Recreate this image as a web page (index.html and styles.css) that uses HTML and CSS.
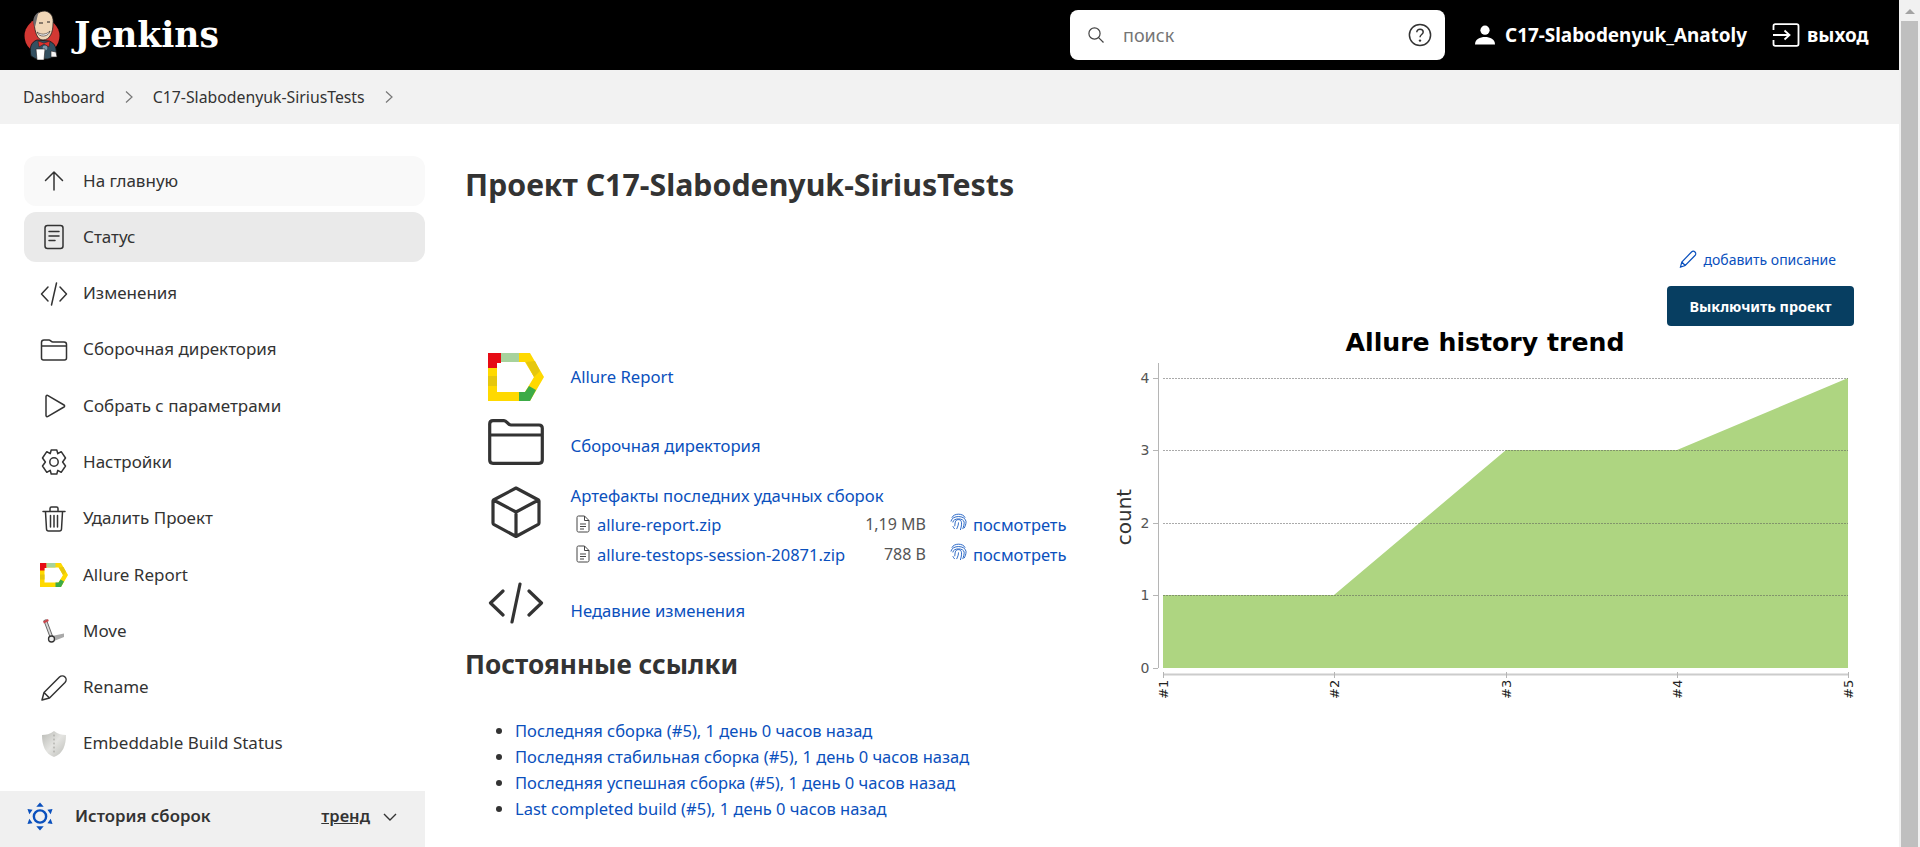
FILE: index.html
```html
<!DOCTYPE html>
<html lang="ru">
<head>
<meta charset="utf-8">
<title>C17-Slabodenyuk-SiriusTests</title>
<link rel="stylesheet" href="styles.css">
</head>
<body>
<div class="window">
  <div class="page">
    <header class="topbar">
      <a class="brand">
        <svg class="brand-mark" viewBox="0 0 36 50" aria-hidden="true">
          <circle cx="18" cy="26" r="17.5" fill="#d33833"/>
          <path d="M7 46 C5 38 7 32 13 30 L25 31 C31 33 33 38 32 46 L24 49 L12 49 Z" fill="#335061" stroke="#111" stroke-width=".8"/>
          <path d="M10 13 C9 5 15 1 21 1 C27 2 30 7 29 14 C29 22 26 30 19 30 C13 30 11 22 10 13 Z" fill="#f0d6b7" stroke="#231f20" stroke-width=".8"/>
          <path d="M10 15 C8 9 11 4 15 2 C13 6 13 10 11 17 Z" fill="#6d6b6d"/>
          <path d="M13 22 C17 25 22 25 26 21 C25 27 15 28 13 22 Z" fill="#fff" stroke="#231f20" stroke-width=".6"/>
          <path d="M15 13 h4 M23 12 h3" stroke="#231f20" stroke-width="1"/>
          <path d="M14 31 L20 33 L26 31 L25 37 L20 34 L15 37 Z" fill="#e0312c" stroke="#231f20" stroke-width=".5"/>
          <circle cx="21" cy="38" r="2.4" fill="#7d97a8"/>
          <path d="M12 39 h9 l-1 11 h-7 Z" fill="#fff" stroke="#231f20" stroke-width=".6"/>
          <path d="M27 41 l5 1 l1 5 l-6 0 Z" fill="#f5f5f5" stroke="#231f20" stroke-width=".6"/>
        </svg>
        <span class="brand-name">Jenkins</span>
      </a>
      <div class="search">
        <svg class="search-glass" viewBox="0 0 18 18" aria-hidden="true"><circle cx="7.5" cy="7.5" r="5.6"/><path d="M11.6 11.6 L16.5 16.5"/></svg>
        <span class="search-text">поиск</span>
        <svg class="search-help" viewBox="0 0 24 24" aria-hidden="true"><circle cx="12" cy="12" r="10.6"/><path d="M8.8 9.3 C8.8 7.4 10.2 6.2 12 6.2 C13.9 6.2 15.2 7.4 15.2 9 C15.2 11.4 12 11.6 12 14.2"/><circle class="dot" cx="12" cy="17.6" r="1.2"/></svg>
      </div>
      <a class="top-link user">
        <svg class="user-icon" viewBox="0 0 22 22" aria-hidden="true"><circle cx="11" cy="6.2" r="4.6"/><path d="M1 20.5 C1 15 6 13 11 13 C16 13 21 15 21 20.5 Z"/></svg>
        <span>C17-Slabodenyuk_Anatoly</span>
      </a>
      <a class="top-link logout">
        <svg class="exit-icon" viewBox="0 0 28 24" aria-hidden="true"><path d="M1.5 7 V3 C1.5 2 2.3 1.2 3.3 1.2 H24.7 C25.7 1.2 26.5 2 26.5 3 V21 C26.5 22 25.7 22.8 24.7 22.8 H3.3 C2.3 22.8 1.5 22 1.5 21 V17"/><path d="M1 12 H17 M12.5 7.5 L17.5 12 L12.5 16.5"/></svg>
        <span>выход</span>
      </a>
    </header>

    <nav class="crumbs">
      <a>Dashboard</a>
      <svg class="crumb-sep" viewBox="0 0 10 14" aria-hidden="true"><path d="M2 1.5 L8 7 L2 12.5"/></svg>
      <a>C17-Slabodenyuk-SiriusTests</a>
      <svg class="crumb-sep" viewBox="0 0 10 14" aria-hidden="true"><path d="M2 1.5 L8 7 L2 12.5"/></svg>
    </nav>

    <div class="layout">
      <aside class="side">
        <ul class="tasks">
          <li class="task task-soft"><svg class="task-icon" viewBox="0 0 28 28"><path d="M14 23 V5 M5.500 13.500 L14 5 L22.500 13.500"/></svg><span>На главную</span></li>
          <li class="task task-current"><svg class="task-icon" viewBox="0 0 28 28"><rect x="5" y="2.500" width="18" height="23" rx="2.500"/><path d="M9 8.500 H19 M9 13 H19 M9 17.500 H15"/></svg><span>Статус</span></li>
          <li class="task"><svg class="task-icon" viewBox="0 0 28 28"><path d="M8 7 L1.500 14 L8 21 M20 7 L26.500 14 L20 21 M16.500 3 L11.500 25"/></svg><span>Изменения</span></li>
          <li class="task"><svg class="task-icon" viewBox="0 0 28 28"><path d="M1.500 22 V6.500 C1.500 5 2.500 4 4 4 H9 C10.500 4 11 6 13 6 H24 C25.500 6 26.500 7 26.500 8.500 V22 C26.500 23.200 25.700 24 24.500 24 H3.500 C2.300 24 1.500 23.200 1.500 22 Z M1.500 10 H26.500"/></svg><span>Сборочная директория</span></li>
          <li class="task"><svg class="task-icon" viewBox="0 0 28 28"><path d="M6 4.500 C6 3.500 7 3 8 3.600 L24 13 C24.800 13.500 24.800 14.500 24 15 L8 24.400 C7 25 6 24.500 6 23.500 Z"/></svg><span>Собрать с параметрами</span></li>
          <li class="task"><svg class="task-icon" viewBox="0 0 28 28"><circle cx="14" cy="14" r="4.200"/><path d="M11.200 2 H16.800 L17.800 5.700 L21.200 3.700 L25.500 10 L22.600 14 L25.500 18 L21.200 24.300 L17.800 22.300 L16.800 26 H11.200 L10.200 22.300 L6.800 24.300 L2.500 18 L5.400 14 L2.500 10 L6.800 3.700 L10.200 5.700 Z"/></svg><span>Настройки</span></li>
          <li class="task"><svg class="task-icon" viewBox="0 0 28 28"><path d="M3 6.500 H25 M10 6 V3.500 C10 2.600 10.600 2 11.500 2 H16.500 C17.400 2 18 2.600 18 3.500 V6 M5.500 7 L6.500 24 C6.600 25.300 7.400 26 8.500 26 H19.500 C20.600 26 21.400 25.300 21.500 24 L22.500 7 M10.500 10.500 V22 M14 10.500 V22 M17.500 10.500 V22"/></svg><span>Удалить Проект</span></li>
          <li class="task"><svg class="task-icon task-plain" viewBox="0 0 56 48"><use href="#allure-mark"/></svg><span>Allure Report</span></li>
          <li class="task"><svg class="task-icon task-plain" viewBox="0 0 28 28">
            <path d="M4 4 L10 20 L12.500 19 L6.500 3 Z" fill="#d8d8d8" stroke="#444" stroke-width=".8"/>
            <path d="M3 4.500 L8 2 L8.800 4 L4 6.500 Z" fill="#c9434a"/>
            <path d="M12 19 L24 16.500 L24 20 L14 24 Z" fill="#a9a9a9"/>
            <circle cx="11.500" cy="22" r="3" fill="#eee" stroke="#333" stroke-width="1.300"/>
          </svg><span>Move</span></li>
          <li class="task"><svg class="task-icon" viewBox="0 0 28 28"><path d="M2 26 L4 18.500 L19.500 3 C21 1.600 23.500 1.500 25 3 C26.500 4.500 26.400 7 25 8.500 L9.500 24 Z M4 18.500 L9.500 24"/></svg><span>Rename</span></li>
          <li class="task"><svg class="task-icon task-plain" viewBox="0 0 28 28">
            <defs><linearGradient id="shield-shade" x1="0" y1="0" x2="1" y2="1"><stop offset="0" stop-color="#b9bab5"/><stop offset=".5" stop-color="#e4e4e1"/><stop offset="1" stop-color="#bcbdb8"/></linearGradient></defs>
            <path d="M14 1 C10 4 6 5 2 5 C2 15 5 24 14 27 C23 24 26 15 26 5 C22 5 18 4 14 1 Z" fill="url(#shield-shade)"/>
            <path d="M14 5 V24" stroke="#9b9b96" stroke-width="1" stroke-dasharray="1 3"/>
          </svg><span>Embeddable Build Status</span></li>
        </ul>
        <section class="history">
          <svg class="history-icon" viewBox="0 0 28 30" aria-hidden="true"><circle cx="14" cy="15" r="6.600"/><path class="fill" d="M14 0 L18 4.500 H10 Z M14 30 L10 25.500 H18 Z M0.500 7 L6 7.600 L2.500 12.500 Z M27.500 7 L22 7.600 L25.500 12.500 Z M0.500 23 L2.500 17.500 L6 22.400 Z M27.500 23 L25.500 17.500 L22 22.400 Z"/></svg>
          <h2 class="history-title">История сборок</h2>
          <a class="history-trend">тренд</a>
          <svg class="history-chevron" viewBox="0 0 14 8" aria-hidden="true"><path d="M1 1 L7 7 L13 1"/></svg>
        </section>
      </aside>

      <main class="main">
        <h1 class="title">Проект C17-Slabodenyuk-SiriusTests</h1>
        <div class="actions">
          <a class="add-desc">
            <svg class="add-desc-icon" viewBox="0 0 18 18" aria-hidden="true"><path d="M1.500 17 L2.800 12 L12.500 2 C13.500 1 15 1 16 2 C17 3 17 4.500 16 5.500 L6.200 15.500 Z M2.800 12 L6.200 15.500"/></svg>
            <span>добавить описание</span>
          </a>
          <button class="disable-btn" type="button">Выключить проект</button>
        </div>

        <div class="columns">
          <div class="assets">
            <div class="asset asset-allure">
              <svg class="asset-icon" viewBox="0 0 56 48" aria-hidden="true">
                <g id="allure-mark">
                  <path fill="#ffd900" d="M0 0 H42 L56 24 L42 48 H0 Z M9 9 V39 H37 L46 24 L37 9 Z" fill-rule="evenodd"/>
                  <path fill="#e60b14" d="M0 0 H13 V10 H9 V15 H0 Z"/>
                  <rect x="13" width="18" height="9" fill="#a7d29c"/>
                  <path fill="#e6c70d" d="M38 9 L47 8 L52 18 L46 24 Z"/>
                  <rect y="23" width="9" height="10" fill="#e6c70d"/>
                  <path fill="#3cab48" d="M31 39 H37 L41 33 L48 37 L42 48 H31 Z"/>
                </g>
              </svg>
              <a class="asset-link">Allure Report</a>
            </div>
            <div class="asset asset-folder">
              <svg class="asset-icon" viewBox="0 0 56 46" aria-hidden="true"><path d="M1.700 41 V5 C1.700 3 3 1.700 5 1.700 H16 C19 1.700 20 6 23 6 H51 C53 6 54.300 7.200 54.300 9.200 V41 C54.300 43 53 44.300 51 44.300 H5 C3 44.300 1.700 43 1.700 41 Z M1.700 16 H54.300"/></svg>
              <a class="asset-link">Сборочная директория</a>
            </div>
            <div class="asset asset-artifacts">
              <svg class="asset-icon cube" viewBox="0 0 50 52" aria-hidden="true"><path d="M25 2 L47.500 14 C48 14.300 48 14.600 48 15 V37 C48 37.500 47.800 38 47.300 38.300 L25 50.500 L2.700 38.300 C2.200 38 2 37.500 2 37 V15 C2 14.600 2.200 14.200 2.500 14 Z M2.500 14 L25 26 L47.500 14 M25 26 V50"/></svg>
              <div class="artifact-body">
                <a class="asset-link artifact-head">Артефакты последних удачных сборок</a>
                <div class="artifact">
                  <svg class="file-icon" viewBox="0 0 14 18" aria-hidden="true"><path d="M1 15.500 V2.500 C1 1.600 1.600 1 2.500 1 H8.500 L13 5.500 V15.500 C13 16.400 12.400 17 11.500 17 H2.500 C1.600 17 1 16.400 1 15.500 Z M8.500 1 V5.500 H13 M4 9 H10 M4 11.500 H10 M4 14 H8"/></svg>
                  <a class="artifact-name">allure-report.zip</a>
                  <span class="artifact-size">1,19 MB</span>
                  <svg class="print-icon" viewBox="0 0 18 20" aria-hidden="true"><path d="M2 6 C4 1 14 1 16 6 M1 10 C2 3 16 3 17 10 C17 13 16 15 15 17 M3 11 C3 6 15 6 15 11 C15 13 14.500 15 13.500 18 M5 15 C5.500 12 5 8 9 8 C13 8 12.800 13 11 19 M3 15 C3.500 16 4 17 5 18 M7 18 C8.500 15 9 13 9 11"/></svg>
                  <a class="artifact-view">посмотреть</a>
                </div>
                <div class="artifact">
                  <svg class="file-icon" viewBox="0 0 14 18" aria-hidden="true"><path d="M1 15.500 V2.500 C1 1.600 1.600 1 2.500 1 H8.500 L13 5.500 V15.500 C13 16.400 12.400 17 11.500 17 H2.500 C1.600 17 1 16.400 1 15.500 Z M8.500 1 V5.500 H13 M4 9 H10 M4 11.500 H10 M4 14 H8"/></svg>
                  <a class="artifact-name">allure-testops-session-20871.zip</a>
                  <span class="artifact-size">788 B</span>
                  <svg class="print-icon" viewBox="0 0 18 20" aria-hidden="true"><path d="M2 6 C4 1 14 1 16 6 M1 10 C2 3 16 3 17 10 C17 13 16 15 15 17 M3 11 C3 6 15 6 15 11 C15 13 14.500 15 13.500 18 M5 15 C5.500 12 5 8 9 8 C13 8 12.800 13 11 19 M3 15 C3.500 16 4 17 5 18 M7 18 C8.500 15 9 13 9 11"/></svg>
                  <a class="artifact-view">посмотреть</a>
                </div>
              </div>
            </div>
            <div class="asset asset-changes">
              <svg class="asset-icon" viewBox="0 0 56 42" aria-hidden="true"><path d="M15 9 L2.500 21 L15 33 M41 9 L53.500 21 L41 33 M32 2 L24 40"/></svg>
              <a class="asset-link">Недавние изменения</a>
            </div>
            <h2 class="perma-title">Постоянные ссылки</h2>
            <ul class="perma">
              <li><a>Последняя сборка (#5), 1 день 0 часов назад</a></li>
              <li><a>Последняя стабильная сборка (#5), 1 день 0 часов назад</a></li>
              <li><a>Последняя успешная сборка (#5), 1 день 0 часов назад</a></li>
              <li><a>Last completed build (#5), 1 день 0 часов назад</a></li>
            </ul>
          </div>

          <svg class="trend" viewBox="1105 326 760 380" role="img" aria-label="Allure history trend">
            <text class="trend-title" x="1485" y="351" text-anchor="middle">Allure history trend</text>
            <polygon class="trend-area" points="1163,668 1163,595 1334,595 1506,450 1677,450 1848,378 1848,668"/>
            <path class="trend-grid" d="M1163 378.500 H1848 M1163 450.500 H1848 M1163 523.500 H1848 M1163 595.500 H1848"/>
            <path class="trend-axis" d="M1158.500 363 V668 M1153 378.500 H1158 M1153 450.500 H1158 M1153 523.500 H1158 M1153 595.500 H1158 M1153 668.500 H1158"/>
            <path class="trend-xaxis" d="M1163 674.500 H1848"/>
            <path class="trend-axis" d="M1163.500 672 V678 M1334.500 672 V678 M1506.500 672 V678 M1677.500 672 V678 M1848.500 672 V678"/>
            <text class="trend-y" x="1145" y="383">4</text>
            <text class="trend-y" x="1145" y="455">3</text>
            <text class="trend-y" x="1145" y="528">2</text>
            <text class="trend-y" x="1145" y="600">1</text>
            <text class="trend-y" x="1145" y="673">0</text>
            <text class="trend-label" transform="translate(1131 517) rotate(-90)" text-anchor="middle">count</text>
            <text class="trend-x" transform="translate(1167.500 699) rotate(-90)">#1</text>
            <text class="trend-x" transform="translate(1338.500 699) rotate(-90)">#2</text>
            <text class="trend-x" transform="translate(1510.500 699) rotate(-90)">#3</text>
            <text class="trend-x" transform="translate(1681.500 699) rotate(-90)">#4</text>
            <text class="trend-x" transform="translate(1852.500 699) rotate(-90)">#5</text>
          </svg>
        </div>
      </main>
    </div>
  </div>
  <div class="scrollbar" aria-hidden="true">
    <span class="scroll-arrow"></span>
    <span class="scroll-thumb"></span>
  </div>
</div>
</body>
</html>
```

FILE: styles.css
```css
* { box-sizing: border-box; }

html, body {
  margin: 0;
  height: 847px;
  overflow: hidden;
  background: #fff;
}

body {
  font-family: "Noto Sans", "Open Sans", "Liberation Sans", sans-serif;
  font-size: 16px;
  color: #333;
}

.window { display: flex; height: 847px; overflow: hidden; }
.page { width: 1899px; flex: none; }

/* Scrollbar */
.scrollbar {
  flex: 1;
  background: #f1f1f1;
  display: flex;
  flex-direction: column;
  align-items: center;
  padding-top: 9px;
}
.scroll-arrow {
  width: 0;
  height: 0;
  border-left: 5px solid transparent;
  border-right: 5px solid transparent;
  border-bottom: 5px solid #a3a3a3;
}
.scroll-thumb {
  display: block;
  width: 17px;
  flex: 1;
  margin-top: 7px;
  background: #bfbfbf;
}

/* Top bar */
.topbar {
  height: 70px;
  background: #000;
  display: flex;
  align-items: center;
  color: #fff;
  padding-left: 24px;
}
.brand { display: flex; align-items: center; gap: 14px; width: 1046px; }
.brand-mark { width: 36px; height: 50px; display: block; }
.brand-name {
  font-family: "DejaVu Serif", "Liberation Serif", serif;
  font-weight: 700;
  font-size: 34.500px;
  line-height: 50px;
}
.search {
  width: 375px;
  height: 50px;
  background: #fff;
  border-radius: 8px;
  display: flex;
  align-items: center;
  padding: 0 13px 0 17px;
}
.search-glass { width: 18px; height: 18px; fill: none; stroke: #444; stroke-width: 1.200; }
.search-text { margin-left: 18px; flex: 1; color: #757575; font-size: 18px; }
.search-help { width: 24px; height: 24px; fill: none; stroke: #333; stroke-width: 1.500; }
.search-help .dot { fill: #333; stroke: none; }

.top-link { display: flex; align-items: center; font-weight: 700; font-size: 18.900px; white-space: nowrap; }
.user { margin-left: 29px; gap: 9px; }
.user-icon { width: 22px; height: 22px; fill: #fff; }
.logout { margin-left: 25px; gap: 7px; }
.exit-icon { width: 28px; height: 24px; fill: none; stroke: #fff; stroke-width: 1.800; }

/* Breadcrumbs */
.crumbs {
  height: 54px;
  background: #f2f2f2;
  display: flex;
  align-items: center;
  padding-left: 23px;
  font-size: 15.800px;
}
.crumb-sep { width: 10px; height: 14px; margin: 0 19px; fill: none; stroke: #777; stroke-width: 1.200; }

/* Layout */
.layout { display: flex; height: 723px; overflow: hidden; }
.side { width: 425px; flex: none; padding-top: 32px; }

.tasks { list-style: none; margin: 0; padding: 0 0 0 24px; }
.task {
  height: 50px;
  margin-bottom: 6.300px;
  border-radius: 12px;
  display: flex;
  align-items: center;
  padding-left: 16px;
  color: #333;
  font-size: 17px;
}
.task span { margin-bottom: 2px; }
.task-soft { background: #f9f9f9; }
.task-current { background: #eaeaea; }
.task-icon {
  width: 28px;
  height: 28px;
  flex: none;
  margin-right: 15px;
  fill: none;
  stroke: #333;
  stroke-width: 1.500;
  stroke-linecap: round;
  stroke-linejoin: round;
}
.task-plain { stroke: none; }

.history {
  margin-top: 22px;
  height: 70px;
  background: #f0f0f0;
  display: flex;
  align-items: flex-start;
  padding: 11px 0 0 27px;
}
.history-icon { width: 26px; height: 29px; flex: none; fill: none; stroke: #0a50bd; stroke-width: 2.600; }
.history-icon .fill { fill: #0a50bd; stroke: none; }
.history-title {
  margin: 0 0 0 22px;
  font-size: 16.800px;
  font-weight: 600;
  line-height: 28px;
  flex: 1;
}
.history-trend { font-size: 16.500px; font-weight: 600; line-height: 28px; text-decoration: underline; }
.history-chevron { width: 14px; height: 8px; margin: 11px 28px 0 13px; fill: none; stroke: #333; stroke-width: 1.400; }

/* Main */
.main { flex: 1; padding: 41px 45px 0 40px; min-width: 0; }
.title { margin: 0; font-size: 30.300px; line-height: 40px; font-weight: 700; color: #333; white-space: nowrap; }

.actions {
  display: flex;
  flex-direction: column;
  align-items: flex-end;
  margin-top: 43px;
}
.add-desc {
  display: flex;
  align-items: center;
  gap: 6px;
  height: 22px;
  margin-right: 18px;
  font-size: 14px;
  color: #0a50bd;
}
.add-desc-icon { width: 18px; height: 18px; fill: none; stroke: #0a50bd; stroke-width: 1.200; }
.disable-btn {
  margin-top: 16px;
  width: 187px;
  height: 40px;
  border: 0;
  border-radius: 4px;
  background: #073e61;
  color: #fff;
  font: 700 14.400px "Noto Sans", "Open Sans", sans-serif;
}

.columns { display: flex; }
.assets { width: 640px; flex: none; font-size: 16.700px; }

.asset {
  display: flex;
  margin-left: 23px;
}
.asset-icon {
  width: 56px;
  flex: none;
  margin-right: 26.500px;
  fill: none;
  stroke: #333;
  stroke-width: 3.200;
  stroke-linecap: round;
  stroke-linejoin: round;
}
.asset a { color: #0a50bd; }
.asset-link { line-height: 22px; white-space: nowrap; }

.asset-allure { margin-top: 27px; height: 48px; align-items: center; }
.asset-allure .asset-icon { height: 48px; stroke: none; }
.asset-folder { margin-top: 18px; height: 46px; }
.asset-folder .asset-icon { height: 46px; }
.asset-folder .asset-link { margin-top: 16px; }
.asset-artifacts { margin-top: 21px; }
.asset-artifacts .cube { height: 52px; }
.asset-changes { margin-top: 13px; height: 42px; }
.asset-changes .asset-icon { height: 42px; }
.asset-changes .asset-link { margin-top: 18px; }

.artifact-body { flex: 1; min-width: 0; }
.artifact-head { display: block; margin-top: -1px; }
.artifact { display: flex; align-items: center; height: 30px; margin-left: 5.500px; font-size: 16.500px; }
.artifact-head + .artifact { margin-top: 2px; }
.file-icon { width: 14px; height: 18px; flex: none; fill: none; stroke: #444; stroke-width: 1; margin-right: 7px; }
.artifact-name { width: 259px; white-space: nowrap; }
.artifact-size { width: 70px; text-align: right; color: #555; white-space: nowrap; font-size: 16px; }
.print-icon { width: 17px; height: 19px; flex: none; margin: -6px 6px 0 24px; fill: none; stroke: #0a50bd; stroke-width: .9; }

.perma-title { margin: 24px 0 0; font-size: 26.200px; line-height: 32px; font-weight: 700; color: #333; }
.perma { margin: 38px 0 0; padding-left: 50px; line-height: 25.900px; font-size: 16.500px; }
.perma a { color: #0a50bd; white-space: nowrap; }

.trend { width: 760px; height: 380px; flex: none; margin-left: 0; display: block; }
.trend text { font-family: "DejaVu Sans", sans-serif; }
.trend .trend-title { font-size: 25.200px; font-weight: 700; fill: #000; }
.trend-area { fill: #aed581; }
.trend-grid { stroke: #555; stroke-opacity: .5; stroke-width: 1; stroke-dasharray: 2 1; fill: none; }
.trend-axis { stroke: #b5b5b5; stroke-width: 1; fill: none; }
.trend-xaxis { stroke: #ccc; stroke-width: 2; fill: none; }
.trend .trend-y { font-size: 14px; fill: #555; text-anchor: middle; }
.trend .trend-label { font-size: 20px; fill: #333; }
.trend .trend-x { font-size: 13px; fill: #222; }
```
